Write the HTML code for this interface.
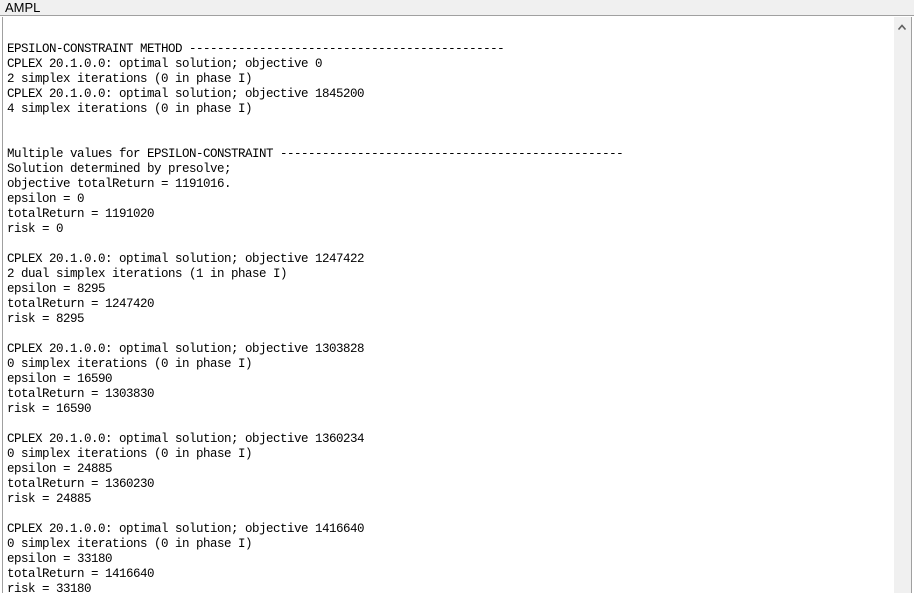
<!DOCTYPE html>
<html><head><meta charset="utf-8"><style>
html,body{margin:0;padding:0;background:#fff;width:914px;height:593px;overflow:hidden;position:relative}
.title{position:absolute;left:0;top:0;width:914px;height:16px;background:#f0f0f0;border-bottom:1px solid #a0a0a0;font:13px "Liberation Sans",sans-serif;color:#000;line-height:16px;padding-left:5px;box-sizing:border-box}
.lb{position:absolute;left:2px;top:17px;width:1px;height:576px;background:#a0a0a0}
.rb{position:absolute;left:911px;top:17px;width:1px;height:576px;background:#a0a0a0}
.sb{position:absolute;left:894px;top:17px;width:17px;height:576px;background:#f0f0f0}
.arrow{position:absolute;left:898px;top:24px;width:8px;height:6px}
pre{position:absolute;left:7px;top:42px;margin:0;font:12.5px "Liberation Mono",monospace;letter-spacing:-0.5px;line-height:15px;color:#000}
</style></head><body>
<div class="title">AMPL</div>
<div class="lb"></div>
<div class="sb"></div>
<div class="rb"></div>
<svg class="arrow" viewBox="0 0 8 6"><path d="M0.5 5.5 L4 1.5 L7.5 5.5" fill="none" stroke="#606060" stroke-width="1.6"/></svg>
<pre>EPSILON-CONSTRAINT METHOD ---------------------------------------------
CPLEX 20.1.0.0: optimal solution; objective 0
2 simplex iterations (0 in phase I)
CPLEX 20.1.0.0: optimal solution; objective 1845200
4 simplex iterations (0 in phase I)


Multiple values for EPSILON-CONSTRAINT -------------------------------------------------
Solution determined by presolve;
objective totalReturn = 1191016.
epsilon = 0
totalReturn = 1191020
risk = 0

CPLEX 20.1.0.0: optimal solution; objective 1247422
2 dual simplex iterations (1 in phase I)
epsilon = 8295
totalReturn = 1247420
risk = 8295

CPLEX 20.1.0.0: optimal solution; objective 1303828
0 simplex iterations (0 in phase I)
epsilon = 16590
totalReturn = 1303830
risk = 16590

CPLEX 20.1.0.0: optimal solution; objective 1360234
0 simplex iterations (0 in phase I)
epsilon = 24885
totalReturn = 1360230
risk = 24885

CPLEX 20.1.0.0: optimal solution; objective 1416640
0 simplex iterations (0 in phase I)
epsilon = 33180
totalReturn = 1416640
risk = 33180</pre>
</body></html>
